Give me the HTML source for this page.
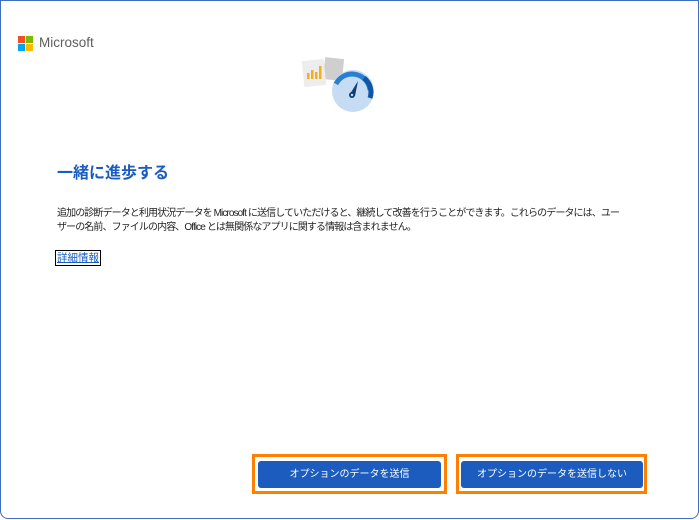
<!DOCTYPE html>
<html><head><meta charset="utf-8"><style>
body{margin:0;width:700px;height:520px;background:#fff;font-family:"Liberation Sans","Noto Sans CJK JP",sans-serif;overflow:hidden}
.win{position:absolute;left:0;top:0;width:697px;height:517px;border:1px solid #3f6fbf;border-radius:0 0 8px 8px;box-sizing:content-box}
.logo{position:absolute;left:18px;top:36px}
.ms{position:absolute;left:39px;top:35px;font-size:13.5px;color:#5e5e5e}
h1{position:absolute;left:57px;top:159px;margin:0;font-size:16px;color:#1a5cc0;font-weight:bold}
.p{position:absolute;left:57px;top:207px;font-size:10px;line-height:14px;color:#222;white-space:nowrap;letter-spacing:-0.9px}
.link{position:absolute;left:55px;top:250px;font-size:10.5px;color:#1a5cc0;text-decoration:underline;border:1px solid #000;padding:0 1px;line-height:14px}
.ob{position:absolute;top:454px;height:34px;border:3px solid #ff8000;}
.btn{position:absolute;top:461px;height:27px;background:#1c5cbf;border-radius:3px;color:#fff;font-size:10px;text-align:center;line-height:27px}
</style></head><body>
<div class="win"></div>
<svg class="logo" width="15" height="15"><rect x="0" y="0" width="7" height="7" fill="#f25022"/><rect x="8" y="0" width="7" height="7" fill="#7fba00"/><rect x="0" y="8" width="7" height="7" fill="#00a4ef"/><rect x="8" y="8" width="7" height="7" fill="#ffb900"/></svg>
<div class="ms">Microsoft</div>
<svg style="position:absolute;left:298px;top:54px" width="82" height="60">
<rect x="26" y="4" width="19" height="22" fill="#cfcfcf" transform="rotate(6 35 15)"/>
<rect x="5" y="6" width="22" height="26" fill="#ededed" transform="rotate(-6 16 19)"/>
<g fill="#f2b01e"><rect x="9" y="19" width="2.5" height="6"/><rect x="13" y="16" width="2.5" height="9"/><rect x="17" y="18" width="2.5" height="7"/><rect x="21" y="12" width="2.5" height="13"/></g>
<circle cx="55" cy="37" r="21" fill="#c6dcf2"/>
<path d="M38 30 A18 18 0 0 1 72 36" stroke="#2a7fd0" stroke-width="5" fill="none"/>
<path d="M66 24 A18 18 0 0 1 72 44" stroke="#0f56a8" stroke-width="5" fill="none"/>
<path d="M52 40 L60 27 L57 42 Z" fill="#0e3f7a"/><circle cx="54" cy="41" r="3" fill="#0e3f7a"/><circle cx="54" cy="41" r="1.2" fill="#c6dcf2"/>
</svg>
<h1>一緒に進歩する</h1>
<div class="p">追加の診断データと利用状況データを Microsoft に送信していただけると、継続して改善を行うことができます。これらのデータには、ユー<br>ザーの名前、ファイルの内容、Office とは無関係なアプリに関する情報は含まれません。</div>
<div class="link">詳細情報</div>
<div class="ob" style="left:252px;width:189px"></div>
<div class="btn" style="left:258px;width:183px">オプションのデータを送信</div>
<div class="ob" style="left:456px;width:185px"></div>
<div class="btn" style="left:461px;width:182px">オプションのデータを送信しない</div>
</body></html>
